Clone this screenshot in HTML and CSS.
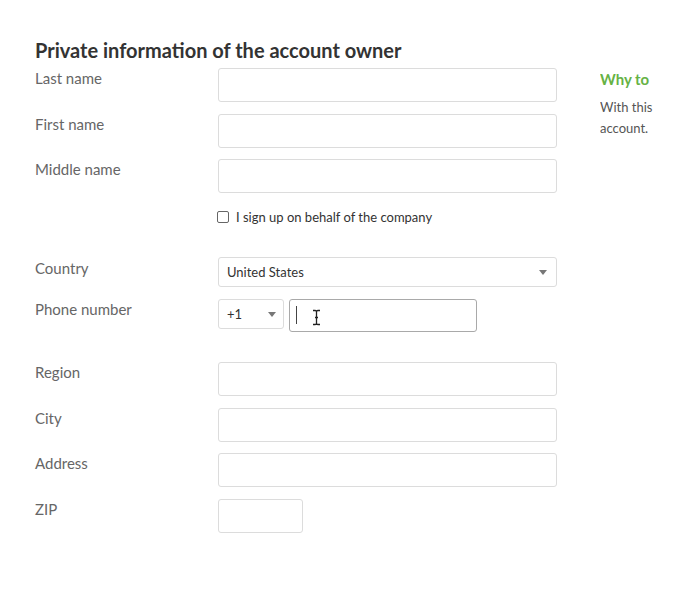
FILE: index.html
```html
<!DOCTYPE html>
<html lang="en">
<head>
    <meta charset="UTF-8">
    <meta name="viewport" content="width=device-width, initial-scale=1.0">
    <title>Account owner</title>
    <link rel="stylesheet" href="styles.css">
</head>
<body>
<div class="page">
    <div class="main">
        <h2 class="title">Private information of the account owner</h2>

        <div class="row">
            <label class="label">Last name</label>
            <input class="field" type="text">
        </div>
        <div class="row">
            <label class="label">First name</label>
            <input class="field" type="text">
        </div>
        <div class="row">
            <label class="label">Middle name</label>
            <input class="field" type="text">
        </div>

        <div class="check-row">
            <span class="box"></span>
            <span class="check-text">I sign up on behalf of the company</span>
        </div>

        <div class="row row-country">
            <label class="label">Country</label>
            <div class="select select-wide">
                <span>United States</span>
                <span class="arrow"></span>
            </div>
        </div>

        <div class="row row-phone">
            <label class="label">Phone number</label>
            <div class="phone">
                <div class="select select-code">
                    <span>+1</span>
                    <span class="arrow"></span>
                </div>
                <div class="phone-input">
                    <span class="caret"></span>
                    <!-- mouse cursor over the field -->
                    <svg class="ibeam" width="9" height="17" viewBox="0 0 9 17">
                        <path d="M1 1.5h2.2c.8 0 1.3.5 1.3 1.3M8 1.5H5.8c-.8 0-1.3.5-1.3 1.3v11.4c0 .8-.5 1.3-1.3 1.3H1M4.5 14.2c0 .8.5 1.3 1.3 1.3H8M3 8.5h3" fill="none" stroke="#222" stroke-width="1.3"/>
                    </svg>
                </div>
            </div>
        </div>

        <div class="row">
            <label class="label">Region</label>
            <input class="field" type="text">
        </div>
        <div class="row">
            <label class="label">City</label>
            <input class="field" type="text">
        </div>
        <div class="row">
            <label class="label">Address</label>
            <input class="field" type="text">
        </div>
        <div class="row">
            <label class="label">ZIP</label>
            <input class="field field-zip" type="text">
        </div>
    </div>

    <aside class="why">
        <h3 class="why-title">Why to</h3>
        <p class="why-text">
            <span>With this</span>
            <span>account.</span>
        </p>
    </aside>
</div>
</body>
</html>
```

FILE: styles.css
```css
body {
    margin: 0;
    font-family: Lato, "Open Sans", sans-serif;
    background-color: #fff;
    color: #333;
}

.page {
    display: flex;
    padding: 38px 0 0 35px;
}

.main {
    width: 522px;
}

.title {
    margin: 0 0 6px;
    font-size: 20px;
    line-height: 24px;
    font-weight: 700;
    color: #333;
}

.row {
    display: flex;
    align-items: flex-start;
    margin-bottom: 11.5px;
}

.label {
    width: 183px;
    flex-shrink: 0;
    font-size: 15px;
    line-height: 20px;
    color: #666;
}

.field {
    width: 339px;
    height: 34px;
    box-sizing: border-box;
    border: 1px solid #dcdcdc;
    border-radius: 3px;
    margin: 0;
    padding: 0 8px;
    font: inherit;
    background: #fff;
}

.field-zip {
    width: 85px;
}

/* margins collapse with the row above */
.check-row {
    display: flex;
    align-items: center;
    margin: 18px 0 0 182px;
    height: 12px;
}

.box {
    width: 12px;
    height: 12px;
    box-sizing: border-box;
    border: 1px solid #666;
    border-radius: 2px;
    margin-right: 7px;
}

.check-text {
    font-size: 13px;
    color: #333;
}

.row-country {
    margin-top: 34px;
    margin-bottom: 12px;
}

.row-country .label {
    padding-top: 1px;
}

.select {
    display: flex;
    align-items: center;
    justify-content: space-between;
    height: 30px;
    box-sizing: border-box;
    border: 1px solid #dcdcdc;
    border-radius: 3px;
    padding: 0 9px 0 8px;
    font-size: 13px;
    color: #333;
}

.select-wide {
    width: 339px;
}

.select-code {
    width: 66px;
    padding-right: 7px;
}

.arrow {
    width: 0;
    height: 0;
    border-left: 4px solid transparent;
    border-right: 4px solid transparent;
    border-top: 5px solid #777;
}

.row-phone {
    margin-bottom: 30px;
}

.phone {
    display: flex;
    gap: 5px;
}

.phone-input {
    position: relative;
    width: 188px;
    height: 33px;
    box-sizing: border-box;
    border: 1px solid #a9a9a9;
    border-radius: 3px;
}

.caret {
    position: absolute;
    left: 6px;
    top: 6px;
    width: 1px;
    height: 18px;
    background: #444;
}

.ibeam {
    position: absolute;
    left: 22px;
    top: 9px;
}

.why {
    width: 60px;
    margin-left: 43px;
    padding-top: 31px;
    overflow: hidden;
    white-space: nowrap;
}

.why-title {
    margin: 0 0 8px;
    font-size: 15px;
    line-height: 20px;
    font-weight: 700;
    color: #66b245;
}

.why-text {
    margin: 0;
    font-size: 13px;
    line-height: 21px;
    color: #555;
}

.why-text span {
    display: block;
}
```
